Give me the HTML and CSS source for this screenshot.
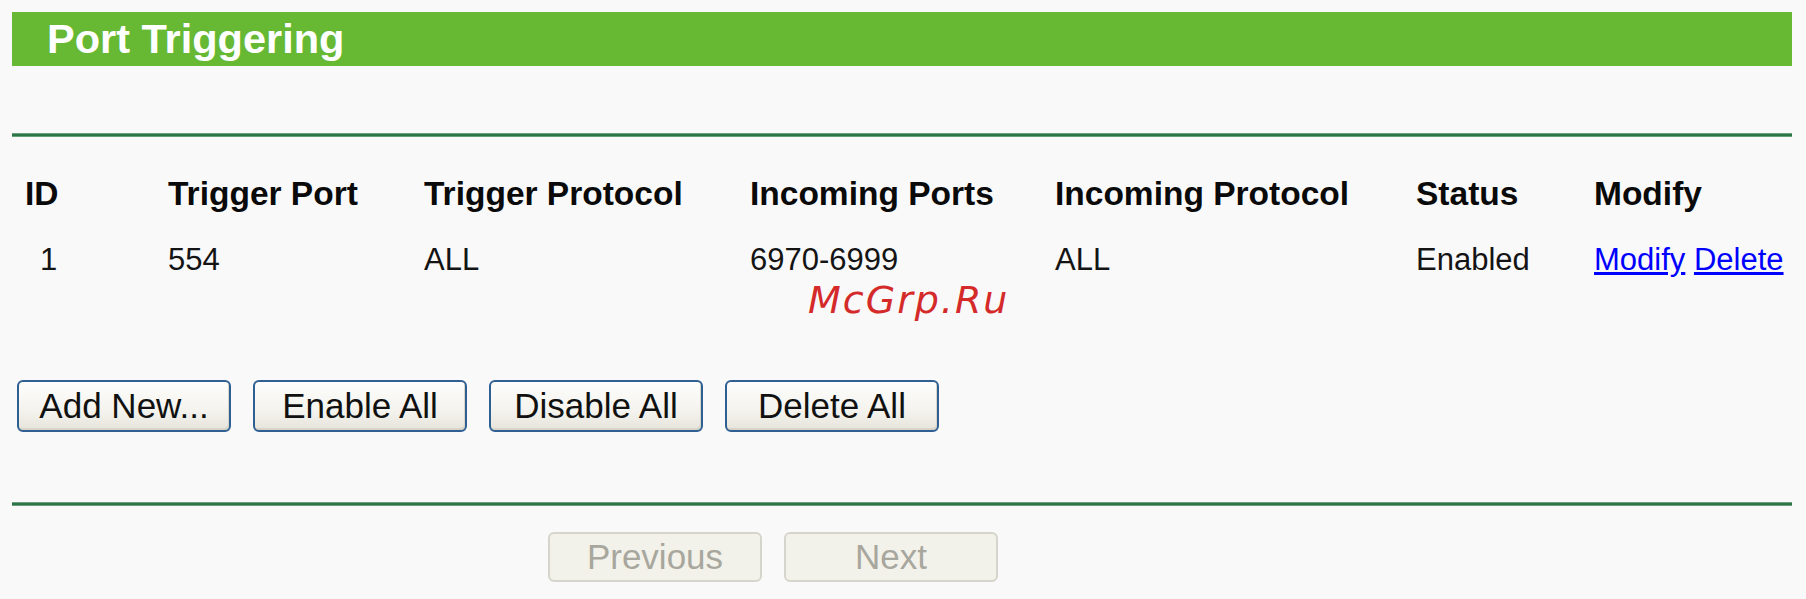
FILE: index.html
```html
<!DOCTYPE html>
<html>
<head>
<meta charset="utf-8">
<title>Port Triggering</title>
<link rel="stylesheet" href="styles.css">
</head>
<body>
<div class="page">
  <div class="titlebar"><span class="title">Port Triggering</span></div>
  <div class="rule rule-top"></div>
  <div class="table">
    <div class="row head">
      <div class="cell">ID</div>
      <div class="cell">Trigger Port</div>
      <div class="cell">Trigger Protocol</div>
      <div class="cell">Incoming Ports</div>
      <div class="cell">Incoming Protocol</div>
      <div class="cell">Status</div>
      <div class="cell">Modify</div>
    </div>
    <div class="row data">
      <div class="cell id">1</div>
      <div class="cell">554</div>
      <div class="cell">ALL</div>
      <div class="cell">6970-6999</div>
      <div class="cell">ALL</div>
      <div class="cell">Enabled</div>
      <div class="cell"><a href="#" class="link">Modify</a> <a href="#" class="link">Delete</a></div>
    </div>
  </div>
  <div class="actions">
    <button class="btn">Add New...</button>
    <button class="btn">Enable All</button>
    <button class="btn">Disable All</button>
    <button class="btn">Delete All</button>
  </div>
  <div class="rule rule-bottom"></div>
  <div class="pager">
    <button class="btn btn-disabled" disabled>Previous</button>
    <button class="btn btn-disabled" disabled>Next</button>
  </div>
  <div class="watermark">McGrp.Ru</div>
</div>
</body>
</html>
```
FILE: styles.css
```css
html, body {
  margin: 0;
  padding: 0;
  background: #f9f9f9;
}

body {
  width: 1806px;
  height: 599px;
  overflow: hidden;
  font-family: "Liberation Sans", Arial, sans-serif;
  color: #111;
}

.page {
  position: relative;
  padding: 12px 14px 0 12px;
}

.titlebar {
  height: 54px;
  background: #67b934;
  display: flex;
  align-items: center;
  padding-left: 35px;
}

.title {
  color: #ffffff;
  font-weight: bold;
  font-size: 41.5px;
  line-height: 54px;
}

.rule {
  height: 4px;
  background: linear-gradient(#a8cdb3 0, #2d7447 25%, #2d7447 75%, #a3c9ae 100%);
}

.rule-top {
  margin-top: 67px;
}

.rule-bottom {
  margin-top: 70px;
}

.table {
  margin-top: 38px;
  padding-left: 13px;
  display: flex;
  flex-direction: column;
  gap: 29px;
}

.row {
  display: grid;
  grid-template-columns: 143px 256px 326px 305px 361px 178px 1fr;
}

.row.head {
  font-weight: bold;
  font-size: 33.5px;
  line-height: 38px;
  color: #0a0a0a;
}

.row.data {
  font-size: 31px;
  line-height: 36px;
  color: #141414;
}

.cell {
  white-space: nowrap;
}

.cell.id {
  padding-left: 15px;
}

.link {
  color: #0000ff;
  text-decoration: underline;
}

.actions {
  margin-top: 102px;
  padding-left: 5px;
  display: flex;
  gap: 22px;
}

.pager {
  margin-top: 26px;
  padding-left: 536px;
  display: flex;
  gap: 22px;
}

.btn {
  width: 214px;
  height: 52px;
  padding: 0;
  font-family: "Liberation Sans", Arial, sans-serif;
  font-size: 35px;
  color: #111;
  border: 2px solid #2f5f93;
  border-radius: 6px;
  background: linear-gradient(#fdfdfb 0%, #f4f3ee 60%, #e6e4da 100%);
  box-shadow: inset -1px -2px 0 #d8d5c8;
}

.btn-disabled {
  height: 50px;
  color: #a8a79e;
  border: 2px solid #d6d5cb;
  background: #f3f2ea;
  box-shadow: none;
}

.watermark {
  position: absolute;
  left: 808px;
  top: 281px;
  font-family: "DejaVu Sans", sans-serif;
  font-style: italic;
  font-size: 38px;
  line-height: 38px;
  letter-spacing: 2px;
  color: #d42a2a;
}
```
